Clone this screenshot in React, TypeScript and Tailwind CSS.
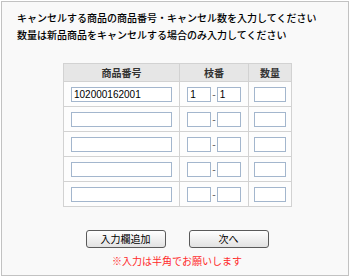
import type { ReactNode } from "react";

const rows = [
  { code: "102000162001", from: "1", to: "1" },
  { code: "", from: "", to: "" },
  { code: "", from: "", to: "" },
  { code: "", from: "", to: "" },
  { code: "", from: "", to: "" },
];

function Box({ value, width }: { value: string; width: string }) {
  return (
    <input
      readOnly
      value={value}
      className={`${width} h-[15px] border border-[#a3b6cd] bg-white px-[2px] text-[10px] leading-[13px] text-black outline-none`}
      style={{ fontFamily: '"Liberation Sans", Arial, sans-serif' }}
    />
  );
}

function Head({ children }: { children: ReactNode }) {
  return (
    <th className="border border-[#d2d2d2] bg-[#e6e6e6] p-0 text-center text-[10px] font-bold leading-[12px] text-[#333]">
      {children}
    </th>
  );
}

export default function App() {
  return (
    <div
      className="h-[277px] w-[350px] bg-white p-px"
      style={{ fontFamily: '"Noto Sans CJK JP", "Noto Sans", sans-serif' }}
    >
      <div className="h-full border border-[#c2c2c2] bg-[#f9f9f9] pl-[15px] pt-[7px]">
        <p className="text-[10px] font-medium leading-[17px] text-black">
          キャンセルする商品の商品番号・キャンセル数を入力してください
          <br />
          数量は新品商品をキャンセルする場合のみ入力してください
        </p>

        <div className="ml-[46px] mt-[20px] w-[228px]">
          <table className="w-[228px] table-fixed border-collapse bg-[#fdfdfd]">
            <colgroup>
              <col className="w-[116px]" />
              <col className="w-[69px]" />
              <col className="w-[43px]" />
            </colgroup>
            <thead>
              <tr className="h-[18px]">
                <Head>商品番号</Head>
                <Head>枝番</Head>
                <Head>数量</Head>
              </tr>
            </thead>
            <tbody>
              {rows.map((row, i) => (
                <tr key={i} className="h-[25px]">
                  <td className="border border-[#d2d2d2] p-0">
                    <div className="flex justify-center">
                      <Box value={row.code} width="w-[101px]" />
                    </div>
                  </td>
                  <td className="border border-[#d2d2d2] p-0">
                    <div className="flex items-center justify-center gap-[1px]">
                      <Box value={row.from} width="w-[24px]" />
                      <span className="text-[10px] leading-[10px] text-[#444]">-</span>
                      <Box value={row.to} width="w-[24px]" />
                    </div>
                  </td>
                  <td className="border border-[#d2d2d2] p-0">
                    <div className="flex justify-center">
                      <Box value="" width="w-[32px]" />
                    </div>
                  </td>
                </tr>
              ))}
            </tbody>
          </table>

          <div className="mt-[23px] flex justify-center gap-[23px]">
            <button className="h-[18px] w-[80px] rounded-[3px] border border-[#5a5a5a] bg-gradient-to-b from-white to-[#e2e2e2] text-[10px] leading-[16px] text-black">
              入力欄追加
            </button>
            <button className="h-[18px] w-[80px] rounded-[3px] border border-[#5a5a5a] bg-gradient-to-b from-white to-[#e2e2e2] text-[10px] leading-[16px] text-black">
              次へ
            </button>
          </div>

          <p className="mt-[6px] text-center text-[10px] leading-[14px] text-[#ff2a2a]">
            ※入力は半角でお願いします
          </p>
        </div>
      </div>
    </div>
  );
}
